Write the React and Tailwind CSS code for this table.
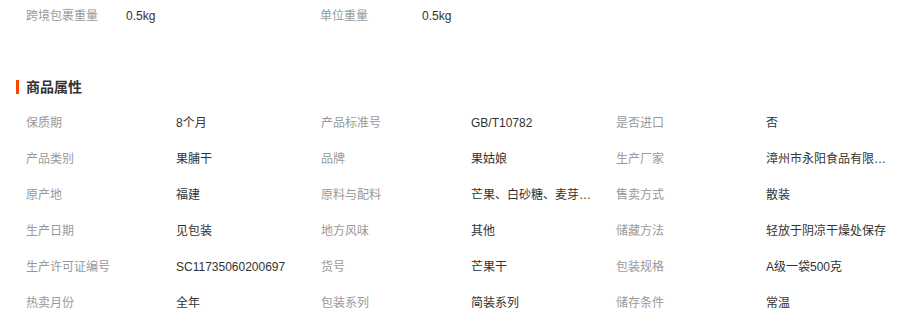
import React from "react";

const rows = [
  [["保质期", "8个月"], ["产品标准号", "GB/T10782"], ["是否进口", "否"]],
  [["产品类别", "果脯干"], ["品牌", "果姑娘"], ["生产厂家", "漳州市永阳食品有限公司"]],
  [["原产地", "福建"], ["原料与配料", "芒果、白砂糖、麦芽糖浆、柠檬酸"], ["售卖方式", "散装"]],
  [["生产日期", "见包装"], ["地方风味", "其他"], ["储藏方法", "轻放于阴凉干燥处保存"]],
  [["生产许可证编号", "SC11735060200697"], ["货号", "芒果干"], ["包装规格", "A级一袋500克"]],
  [["热卖月份", "全年"], ["包装系列", "简装系列"], ["储存条件", "常温"]],
];

export default function App() {
  return (
    <div
      className="w-[922px] h-[315px] bg-white overflow-hidden text-[12px]"
      style={{ fontFamily: '"Liberation Sans", "Noto Sans CJK SC", sans-serif' }}
    >
      <div className="flex items-center h-[32px] pl-[26px]">
        <div className="w-[100px] text-[#999]">跨境包裹重量</div>
        <div className="w-[194px] text-[#333]">0.5kg</div>
        <div className="w-[102px] text-[#999]">单位重量</div>
        <div className="text-[#333]">0.5kg</div>
      </div>
      <div className="mt-[42px] h-[26px] flex items-center pl-[16px]">
        <span className="w-[3px] h-[14px] bg-[#ff4400] mr-[7px]"></span>
        <span className="text-[14px] font-bold text-[#333]">商品属性</span>
      </div>
      <div className="mt-[5px] pl-[26px]">
        {rows.map((row, i) => (
          <div key={i} className="flex items-center h-[36px]">
            {row.map(([k, v], j) => (
              <React.Fragment key={j}>
                <div className="w-[150px] shrink-0 text-[#999] whitespace-nowrap">{k}</div>
                <div className="w-[125px] mr-[20px] shrink-0 text-[#333] whitespace-nowrap overflow-hidden text-ellipsis">
                  {v}
                </div>
              </React.Fragment>
            ))}
          </div>
        ))}
      </div>
    </div>
  );
}
